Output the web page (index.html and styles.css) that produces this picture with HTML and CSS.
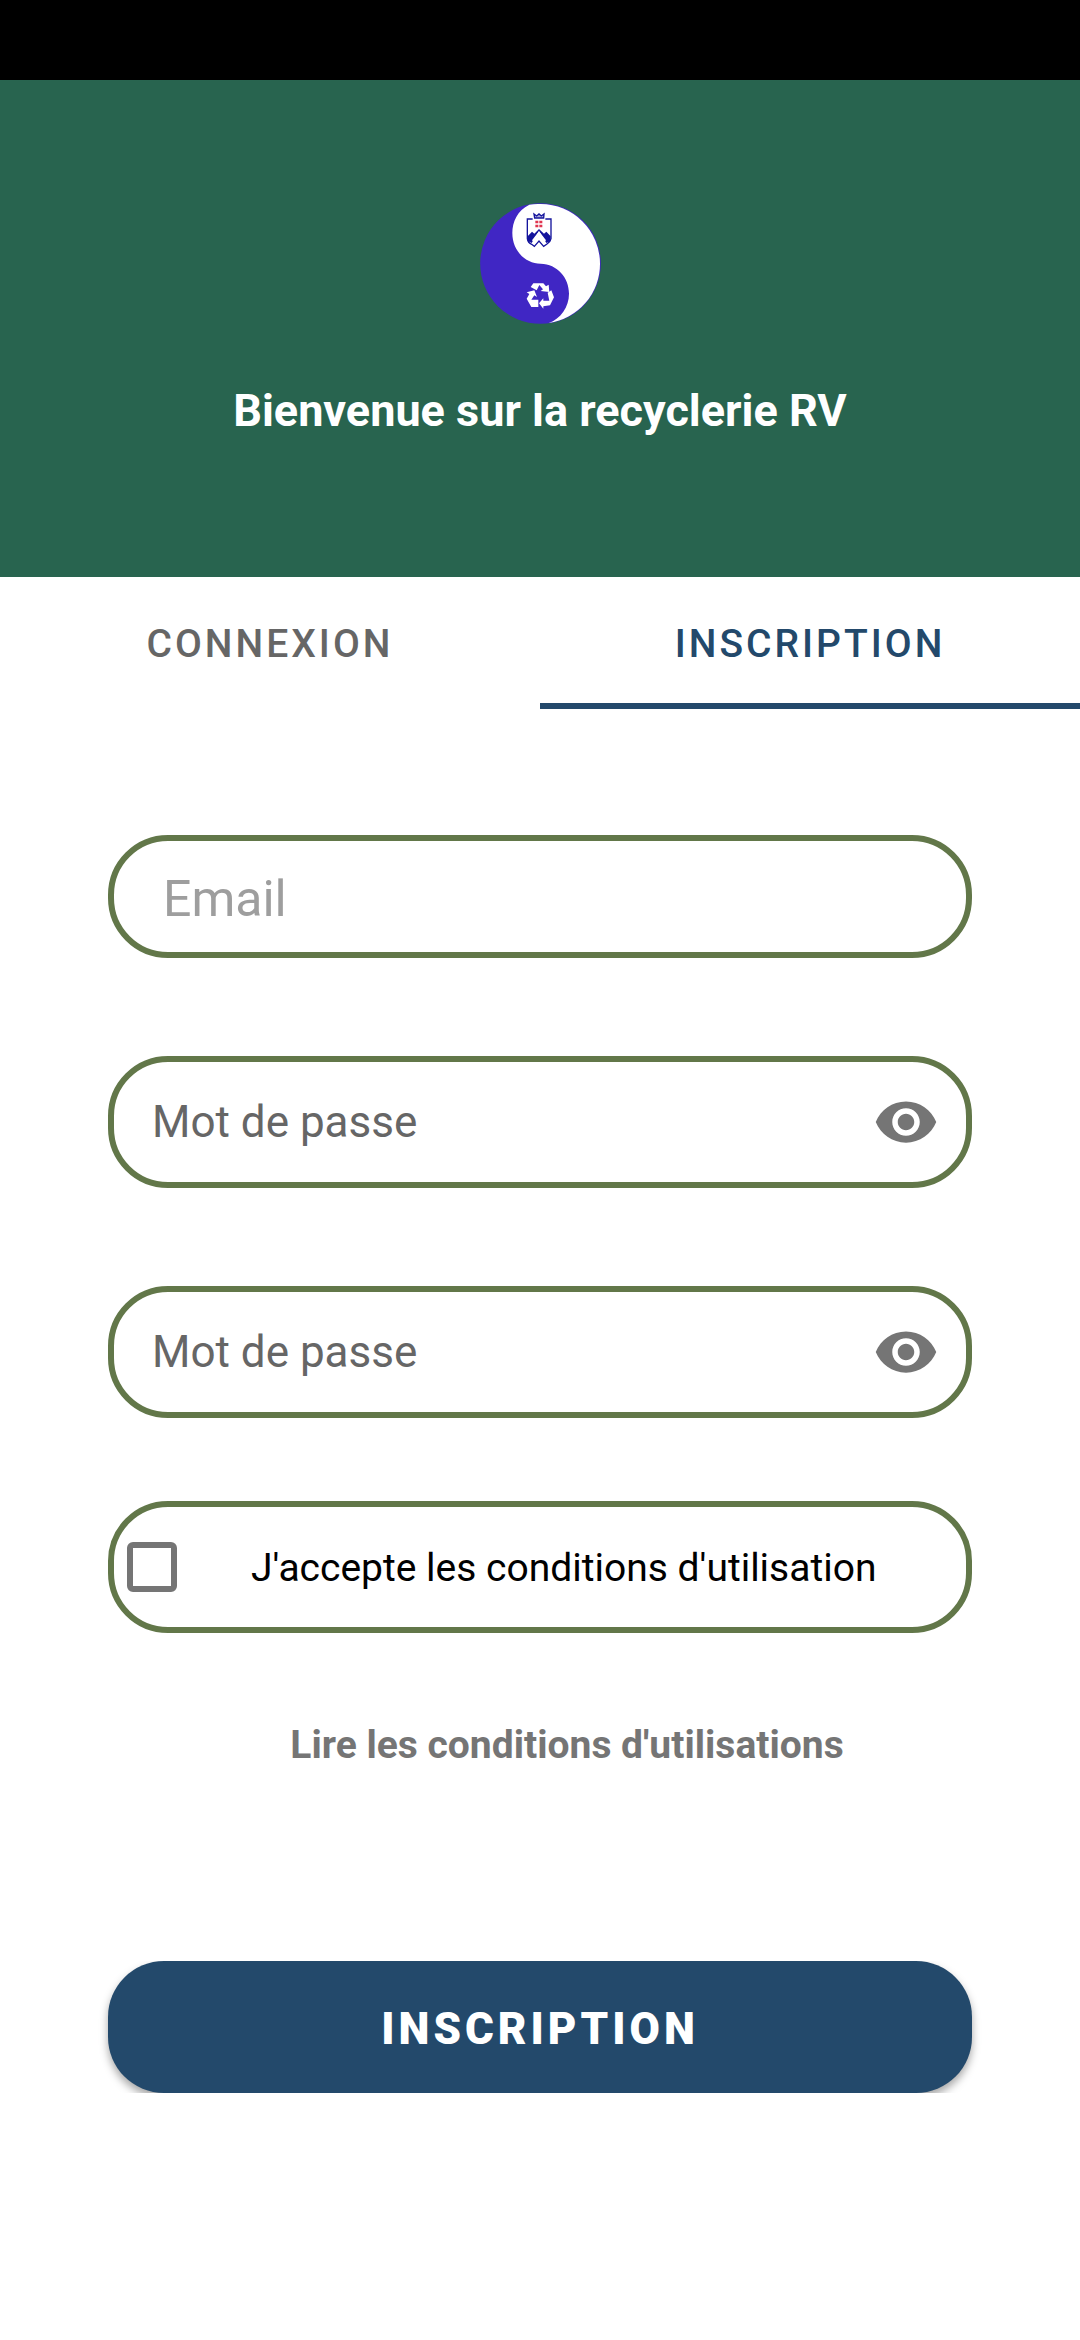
FILE: index.html
```html
<!DOCTYPE html>
<html lang="fr">
<head>
<meta charset="utf-8">
<meta name="viewport" content="width=device-width, initial-scale=1">
<title>Recyclerie RV</title>
<link rel="stylesheet" href="styles.css">
</head>
<body>
<div class="status-bar"></div>
<header class="header">
  <svg class="logo" viewBox="30 38 363 363" aria-hidden="true">
    <circle cx="211.500" cy="219.500" r="181" fill="#4026c4"/>
    <path fill="#fff" d="M178 43C142 60 127 95 127 128C127 180 165 220 212 220C262 221 297 262 297 310C297 350 272 385 236 398A179 179 0 0 0 390 219A179 179 0 0 0 212 41Q195 40 178 43Z"/>
    <g fill="none" stroke="#14149c" stroke-width="4">
      <path d="M188 86H172V145Q174 158 185 162L193 168L207 152L221 168L231 161Q241 155 243 145V86H226"/>
      <path fill="#14149c" d="M194 83H221L222 71L214 77L207 71L200 77L192 71Z" fill-opacity="0.350"/>
    </g>
    <path fill="#14149c" d="M173 138L186 124L193 130L207 116L222 130L229 124L242 138V152L229 158L207 122L185 158L173 152Z"/>
    <path fill="#fff" d="M207 123L228 150L219 160L207 147L195 160L186 150Z"/>
    <path fill="#e0354f" d="M196 91h9v8h-9zM208 91h9v8h-9zM196 103h9v8h-9zM208 103h9v8h-9z"/>
    <g fill="#fff">
      <path d="M190 279H220L228 288L236 283L238 305L212 302L219 297L208 284L200 300L182 290Z"/>
      <path d="M233 307L244 300L252 321L240 345L220 348V355L207 339L220 324V331H238Z"/>
      <path d="M170 306L193 300L201 320L193 315L184 328H205V350H184L170 325L178 311Z"/>
    </g>
  </svg>
  <h1 class="title">Bienvenue sur la recyclerie RV</h1>
</header>
<nav class="tabs">
  <a class="tab" href="#connexion">CONNEXION</a>
  <a class="tab tab-active" href="#inscription" aria-current="page">INSCRIPTION</a>
</nav>
<main>
  <form class="form">
    <div class="field field-email">
      <input class="input input-email" type="email" placeholder="Email" aria-label="Email">
    </div>
    <div class="field">
      <input class="input" type="password" placeholder="Mot de passe" aria-label="Mot de passe">
      <button class="reveal" type="button" aria-label="Afficher le mot de passe">
        <svg class="eye" viewBox="0 0 24 24"><path d="M12 4.500C7 4.500 2.730 7.610 1 12c1.730 4.390 6 7.500 11 7.500s9.270-3.110 11-7.500c-1.730-4.390-6-7.500-11-7.500zM12 17c-2.760 0-5-2.240-5-5s2.240-5 5-5 5 2.240 5 5-2.240 5-5 5zm0-8c-1.660 0-3 1.340-3 3s1.340 3 3 3 3-1.340 3-3-1.340-3-3-3z"/></svg>
      </button>
    </div>
    <div class="field">
      <input class="input" type="password" placeholder="Mot de passe" aria-label="Confirmer le mot de passe">
      <button class="reveal" type="button" aria-label="Afficher le mot de passe">
        <svg class="eye" viewBox="0 0 24 24"><path d="M12 4.500C7 4.500 2.730 7.610 1 12c1.730 4.390 6 7.500 11 7.500s9.270-3.110 11-7.500c-1.730-4.390-6-7.500-11-7.500zM12 17c-2.760 0-5-2.240-5-5s2.240-5 5-5 5 2.240 5 5-2.240 5-5 5zm0-8c-1.660 0-3 1.340-3 3s1.340 3 3 3 3-1.340 3-3-1.340-3-3-3z"/></svg>
      </button>
    </div>
    <div class="field field-terms">
      <input class="checkbox" type="checkbox" id="terms">
      <label class="terms-label" for="terms">J'accepte les conditions d'utilisation</label>
    </div>
    <a class="terms-link" href="#conditions">Lire les conditions d'utilisations</a>
    <button class="submit" type="submit">INSCRIPTION</button>
  </form>
</main>
</body>
</html>
```
FILE: styles.css
```css
* {
  box-sizing: border-box;
}

body {
  margin: 0;
  background: #fff;
  font-family: Roboto, sans-serif;
}

.status-bar {
  height: 80px;
  background: #000;
}

.header {
  display: flex;
  flex-direction: column;
  align-items: center;
  gap: 61px;
  padding: 123px 24px 140px;
  background: #28644f;
}

.logo {
  width: 121px;
  height: 121px;
}

.title {
  margin: 0;
  color: #fff;
  font-size: 45px;
  line-height: 52px;
  font-weight: 700;
}

.tabs {
  display: grid;
  grid-template-columns: 1fr 1fr;
}

.tab {
  padding: 46px 0 38px;
  border-bottom: 6px solid transparent;
  color: #666;
  font-size: 39px;
  line-height: 42px;
  font-weight: 500;
  letter-spacing: 3px;
  text-align: center;
  text-decoration: none;
}

.tab-active {
  border-color: #23496b;
  color: #23496b;
}

.form {
  display: flex;
  flex-direction: column;
  padding: 126px 10%;
}

.field {
  display: flex;
  align-items: center;
  height: 132px;
  margin-bottom: 98px;
  padding: 0 27px 0 38px;
  border: 6px solid #627749;
  border-radius: 60px;
}

.field-email {
  height: 123px;
  padding-top: 4px;
  padding-left: 49px;
}

.field-terms {
  gap: 74px;
  margin: -15px 0 86px;
  padding-left: 13px;
}

.input {
  flex: 1;
  min-width: 0;
  padding: 0;
  border: 0;
  outline: 0;
  background: none;
  color: #000;
  font-family: inherit;
  font-size: 44px;
  line-height: 52px;
}

.input::placeholder {
  color: #666;
  opacity: 1;
}

.input-email {
  font-size: 50px;
  line-height: 60px;
}

.input-email::placeholder {
  color: #9e9e9e;
}

.reveal {
  display: flex;
  padding: 0;
  border: 0;
  background: none;
}

.eye {
  width: 66px;
  height: 66px;
  fill: #757575;
}

.checkbox {
  appearance: none;
  width: 50px;
  height: 50px;
  margin: 0;
  border: 6px solid #757575;
  border-radius: 6px;
}

.checkbox:checked {
  background: #757575;
}

.terms-label {
  padding-top: 2px;
  color: #000;
  font-size: 39px;
  line-height: 46px;
}

.terms-link {
  padding-left: 54px;
  color: #757575;
  font-size: 39px;
  line-height: 52px;
  font-weight: 700;
  text-align: center;
  text-decoration: none;
}

.submit {
  height: 132px;
  margin-top: 190px;
  padding: 4px 0 0;
  border: 0;
  border-radius: 56px;
  background: #23496b;
  box-shadow: 0 5px 8px rgba(0, 0, 0, 0.35);
  clip-path: inset(0 -12px);
  color: #fff;
  font-family: inherit;
  font-size: 44px;
  line-height: 52px;
  font-weight: 900;
  letter-spacing: 4px;
}
```
